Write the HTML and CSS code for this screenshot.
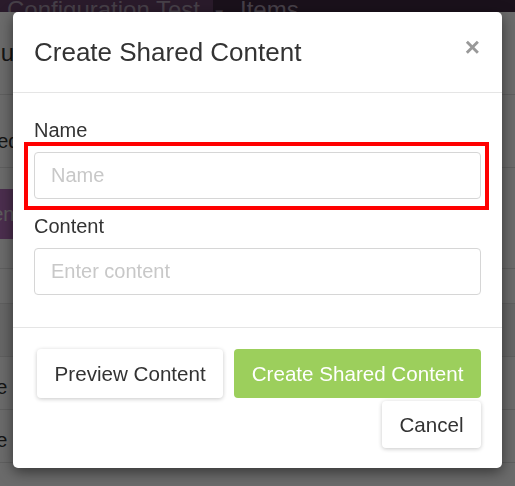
FILE: index.html
```html
<!DOCTYPE html>
<html lang="en">
<head>
<meta charset="UTF-8">
<meta name="viewport" content="width=device-width, initial-scale=1.0">
<title>Create Shared Content</title>
<link rel="stylesheet" href="styles.css">
</head>
<body>
<div class="page">
    <div class="topbar">
        <div class="topbar-brand">Configuration Test <span class="caret">&#9660;</span></div>
        <div class="topbar-link">Items</div>
    </div>
    <div class="page-title"><span class="cut cut-title">Menu</span></div>
    <div class="page-row row-tall"><span class="cut cut-ed">Shared</span></div>
    <div class="page-actions"><span class="btn-purple"><span class="cut cut-nt">Content</span></span></div>
    <div class="page-row row-thin"></div>
    <div class="page-row row-head"></div>
    <div class="page-row"><span class="cut cut-e">Home</span></div>
    <div class="page-row"><span class="cut cut-e">Home</span></div>
</div>

<div class="backdrop"></div>

<div class="modal">
    <div class="modal-header">
        <h4 class="modal-title">Create Shared Content</h4>
        <button class="close" type="button">&times;</button>
    </div>
    <div class="modal-body">
        <div class="form-group">
            <label for="name">Name</label>
            <div class="highlight">
                <input type="text" id="name" class="form-control" placeholder="Name">
            </div>
        </div>
        <div class="form-group">
            <label for="content">Content</label>
            <input type="text" id="content" class="form-control" placeholder="Enter content">
        </div>
    </div>
    <div class="modal-footer">
        <button class="btn btn-default" type="button">Preview Content</button>
        <button class="btn btn-success" type="button">Create Shared Content</button>
        <button class="btn btn-default btn-cancel" type="button">Cancel</button>
    </div>
</div>
</body>
</html>
```

FILE: styles.css
```css
body {
    margin: 0;
    font-family: "Liberation Sans", Arial, sans-serif;
    color: #333;
    background: #fff;
    overflow: hidden;
}
.page {
    width: 515px;
    height: 486px;
}
.topbar {
    display: flex;
    height: 12px;
    overflow: hidden;
    background: #3e2a42;
    color: #a898ac;
    font-size: 24px;
    line-height: 20px;
}
.topbar-brand {
    width: 206px;
    padding-left: 7px;
    background: #654068;
    white-space: nowrap;
}
.caret {
    font-size: 13px;
    margin-left: 6px;
}
.topbar-link {
    padding-left: 27px;
}
.cut {
    display: inline-block;
    white-space: nowrap;
}
.page-title {
    height: 82px;
    border-bottom: 1px solid #e2e2e2;
    font-size: 24px;
    line-height: 82px;
}
.cut-title {
    margin-left: -46px;
}
.page-row {
    height: 52px;
    border-bottom: 1px solid #e2e2e2;
    font-size: 20px;
    line-height: 60px;
}
.row-tall {
    height: 72px;
    line-height: 92px;
}
.cut-ed {
    margin-left: -45px;
}
.page-actions {
    height: 50px;
    padding: 21px 0 29px;
    border-bottom: 1px solid #e2e2e2;
}
.btn-purple {
    display: inline-block;
    width: 40px;
    height: 50px;
    overflow: hidden;
    background: #b26fbb;
    color: #ddd;
    font-size: 20px;
    line-height: 50px;
}
.cut-nt {
    margin-left: -50px;
}
.row-thin {
    height: 34px;
}
.row-head {
    height: 52px;
    background: #f4f4f4;
}
.cut-e {
    margin-left: -46px;
}
.backdrop {
    position: fixed;
    inset: 0;
    background: rgba(0, 0, 0, 0.58);
}
.modal {
    position: absolute;
    left: 13px;
    top: 12px;
    width: 489px;
    background: #fff;
    border-radius: 5px;
    box-shadow: 0 4px 14px rgba(0, 0, 0, 0.5);
}
.modal-header {
    display: flex;
    justify-content: space-between;
    align-items: center;
    height: 80px;
    padding: 0 21px;
    border-bottom: 1px solid #e5e5e5;
}
.modal-title {
    margin: 0;
    font-size: 26px;
    font-weight: normal;
    color: #333;
}
.close {
    margin-top: -10px;
    margin-right: 1px;
    padding: 0;
    border: 0;
    background: none;
    font-family: "Liberation Sans", Arial, sans-serif;
    font-size: 26px;
    font-weight: bold;
    line-height: 1;
    color: #999;
}
.modal-body {
    padding: 23px 21px 19px;
}
.form-group {
    margin-bottom: 13px;
}
label {
    display: block;
    margin-bottom: 8px;
    font-size: 20px;
    line-height: 28px;
    color: #333;
}
.form-control {
    display: block;
    box-sizing: border-box;
    width: 100%;
    height: 47px;
    padding: 0 16px;
    border: 1px solid #d6d6d6;
    border-radius: 4px;
    font-family: "Liberation Sans", Arial, sans-serif;
    font-size: 20px;
    color: #333;
}
.form-control::placeholder {
    color: #c8c8c8;
}
.highlight {
    margin: -10px -8px -11px -10px;
    padding: 6px 4px 7px 6px;
    border: 4px solid #f00;
}
.modal-footer {
    display: flex;
    flex-wrap: wrap;
    justify-content: flex-end;
    gap: 3px 11px;
    padding: 21px 21px 20px 20px;
    border-top: 1px solid #e5e5e5;
}
.btn {
    height: 49px;
    padding: 0 17.5px;
    border: 0;
    border-radius: 4px;
    font-family: "Liberation Sans", Arial, sans-serif;
    font-size: 20.6px;
}
.btn-default {
    background: #fff;
    color: #333;
    box-shadow: 0 1px 4px rgba(0, 0, 0, 0.22);
}
.btn-cancel {
    height: 47px;
}
.btn-success {
    background: #9ccf5c;
    color: #fff;
}
```
